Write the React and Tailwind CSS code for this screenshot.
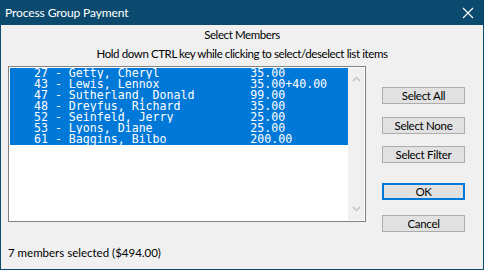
const rows = [
  ["27 - Getty, Cheryl", "35.00"],
  ["43 - Lewis, Lennox", "35.00+40.00"],
  ["47 - Sutherland, Donald", "99.00"],
  ["48 - Dreyfus, Richard", "35.00"],
  ["52 - Seinfeld, Jerry", "25.00"],
  ["53 - Lyons, Diane", "25.00"],
  ["61 - Baggins, Bilbo", "200.00"],
];

function Btn({ children, primary }) {
  return (
    <div
      className={
        "w-[83px] h-[17px] flex items-center justify-center bg-[#e1e1e1] text-black text-[11.5px] tracking-[-0.3px] leading-none " +
        (primary ? "border-2 border-[#0078d7]" : "border border-[#adadad]")
      }
    >
      {children}
    </div>
  );
}

export default function App() {
  const ui = { fontFamily: 'Lato, "Noto Sans", sans-serif' };
  return (
    <div className="w-[484px] h-[270px] bg-[#0b4a6e] flex flex-col px-px pb-px" style={ui}>
      <div className="h-[25px] shrink-0 flex items-center justify-between text-white">
        <span className="pl-[4px] text-[12px] tracking-[-0.1px]">Process Group Payment</span>
        <svg width="12" height="12" viewBox="0 0 12 12" className="mr-[9px]">
          <path d="M1 1L11 11M11 1L1 11" stroke="white" strokeWidth="1.1" />
        </svg>
      </div>
      <div className="flex-1 bg-[#f0f0f0] flex flex-col text-black text-[11.5px] tracking-[-0.4px]">
        <div className="mt-[2px] h-[16px] leading-[16px] text-center">Select Members</div>
        <div className="mt-[3px] h-[16px] leading-[16px] text-center">
          Hold down CTRL key while clicking to select/deselect list items
        </div>
        <div className="mt-[4px] flex">
          <div className="ml-[7px] w-[358px] h-[156px] border border-[#828282] bg-white p-px flex">
            <div className="flex-1 tracking-normal" style={{ fontFamily: '"DejaVu Sans Mono", monospace' }}>
              {rows.map(([n, a]) => (
                <div
                  key={n}
                  className="h-[11px] leading-[11px] text-[11.6px] bg-[#0078d7] text-white whitespace-pre pl-[3px] overflow-hidden"
                >
                  {("   " + n).padEnd(34, " ") + a}
                </div>
              ))}
            </div>
            <div className="w-[16px] bg-[#f0f0f0] flex flex-col items-center justify-between py-[8px]">
              <svg width="9" height="6" viewBox="0 0 9 6">
                <path d="M1 5L4.5 1.5L8 5" stroke="#c3c3c3" strokeWidth="1.5" fill="none" />
              </svg>
              <svg width="9" height="6" viewBox="0 0 9 6">
                <path d="M1 1L4.5 4.5L8 1" stroke="#c3c3c3" strokeWidth="1.5" fill="none" />
              </svg>
            </div>
          </div>
          <div className="ml-[16px] flex flex-col">
            <div className="mt-[21px]">
              <Btn>Select All</Btn>
            </div>
            <div className="mt-[13px]">
              <Btn>Select None</Btn>
            </div>
            <div className="mt-[12px]">
              <Btn>Select Filter</Btn>
            </div>
            <div className="mt-[20px]">
              <Btn primary>OK</Btn>
            </div>
            <div className="mt-[15px]">
              <Btn>Cancel</Btn>
            </div>
          </div>
        </div>
        <div className="mt-[13px] ml-[7px] h-[16px] leading-[16px] tracking-[0px]">7 members selected ($494.00)</div>
      </div>
    </div>
  );
}
